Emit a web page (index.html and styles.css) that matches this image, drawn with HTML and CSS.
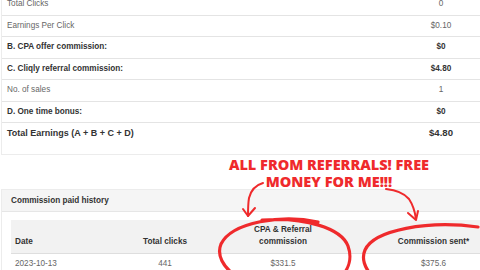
FILE: index.html
```html
<!DOCTYPE html>
<html lang="en">
<head>
    <meta charset="UTF-8">
    <meta name="viewport" content="width=device-width, initial-scale=1.0">
    <title>Earnings</title>

    <link rel="stylesheet" href="styles.css">
</head>

<body>
    <div class="page">
        <div class="card summary">
            <table class="summary-table">
                <tr class="first">
                    <td>Total Clicks</td>
                    <td class="value">0</td>
                </tr>
                <tr>
                    <td>Earnings Per Click</td>
                    <td class="value">$0.10</td>
                </tr>
                <tr class="strong">
                    <td>B. CPA offer commission:</td>
                    <td class="value">$0</td>
                </tr>
                <tr class="strong">
                    <td>C. Cliqly referral commission:</td>
                    <td class="value">$4.80</td>
                </tr>
                <tr>
                    <td>No. of sales</td>
                    <td class="value">1</td>
                </tr>
                <tr class="strong">
                    <td>D. One time bonus:</td>
                    <td class="value">$0</td>
                </tr>
                <tr class="strong total">
                    <td>Total Earnings (A + B + C + D)</td>
                    <td class="value">$4.80</td>
                </tr>
            </table>
        </div>

        <div class="card history">
            <div class="card-header">Commission paid history</div>
            <div class="card-body">
                <table class="history-table">
                    <colgroup>
                        <col class="col-date">
                        <col class="col-clicks">
                        <col class="col-cpa">
                        <col class="col-sent">
                    </colgroup>
                    <thead>
                        <tr>
                            <th class="left">Date</th>
                            <th>Total clicks</th>
                            <th>CPA &amp; Referral<br>commission</th>
                            <th>Commission sent*</th>
                        </tr>
                    </thead>
                    <tbody>
                        <tr>
                            <td class="left">2023-10-13</td>
                            <td>441</td>
                            <td>$331.5</td>
                            <td>$375.6</td>
                        </tr>
                    </tbody>
                </table>
            </div>
        </div>
    </div>

    <!-- scribbles drawn on top of the page -->
    <div class="note">
        <span class="note-line">ALL FROM REFERRALS! FREE</span>
        <span class="note-line">MONEY FOR ME!!!</span>
    </div>
    <svg class="marks" viewBox="0 0 480 270" width="480" height="270">
        <g fill="none" stroke="#ef2a2c" stroke-linecap="round" stroke-linejoin="round">
            <!-- arrows -->
            <path d="M263 183 C256 185 251 190 249 198 C248 204 248 210 248 216" stroke-width="2"/>
            <path d="M243 209 L248 216 L255 208" stroke-width="2"/>
            <path d="M386 189 C396 190 404 193 409 199 C413 205 415 212 416 219" stroke-width="2"/>
            <path d="M408 213 L416 220 L418 211" stroke-width="2"/>
            <!-- rings -->
            <path d="M318 222 C282 214 232 222 221 244 C212 266 246 292 296 292 C338 292 356 268 348 246 C341 228 305 217 262 220" stroke-width="3.2"/>
            <path d="M478 227 C428 220 374 230 365 250 C358 266 375 290 420 294 C450 296 475 294 490 290" stroke-width="3.2"/>
        </g>
    </svg>
</body>
</html>
```

FILE: styles.css
```css
body {
    margin: 0;
    background-color: #FFFFFF;
    font-family: 'Liberation Sans', Arial, sans-serif;
    font-size: 8.2px;
    color: #666;
    overflow: hidden;
    position: relative;
    height: 270px;
}

.page {
    width: 520px;
    margin-top: -7px;
    margin-left: 1px;
}

.card {
    border: 1px solid #ececec;
    background-color: #FFFFFF;
}

table {
    border-collapse: collapse;
}

/* earnings summary */
.summary {
    padding-bottom: 10px;
}

.summary-table {
    width: 100%;
}

.summary-table td {
    border-top: 1px solid #e4e4e4;
    padding: 4px 5px;
    line-height: 12.5px;
}

.summary-table tr.first td {
    border-top: none;
}

.summary-table .value {
    width: 78px;
    padding-right: 40px;
    text-align: center;
}

.summary-table tr.strong td {
    font-weight: bold;
    color: #333;
}

.summary-table tr.total td {
    font-size: 9px;
    line-height: 14px;
    padding-top: 3px;
}

.summary-table tr.total .value {
    font-size: 9.6px;
}

/* paid history */
.history {
    margin-top: 34px;
}

.card-header {
    background-color: #f5f5f5;
    border-bottom: 1px solid #e6e6e6;
    padding: 5px 9px;
    line-height: 11px;
    font-weight: bold;
    color: #333;
}

.card-body {
    padding: 8px 9px 20px;
}

.history-table {
    width: 500px;
    table-layout: fixed;
}

.col-date { width: 109px; }
.col-clicks { width: 90px; }
.col-cpa { width: 146px; }
.col-sent { width: 155px; }

.history-table th {
    background-color: #f2f2f2;
    color: #333;
    font-weight: bold;
    text-align: center;
    vertical-align: bottom;
    padding: 4px 4px 6px;
    line-height: 11.5px;
}

.history-table td {
    border-top: 1px solid #dedede;
    text-align: center;
    padding: 4px 4px;
    line-height: 12px;
}

.history-table .left {
    text-align: left;
}

/* red hand notes */
.note {
    position: absolute;
    left: 209px;
    top: 156px;
    width: 240px;
    display: flex;
    flex-direction: column;
    align-items: center;
    font-family: 'Open Sans', 'Liberation Sans', sans-serif;
    font-weight: 800;
    font-size: 14.5px;
    color: #ef2a2c;
}

.note-line {
    display: block;
    height: 17px;
    line-height: 17px;
    white-space: nowrap;
}

.marks {
    position: absolute;
    left: 0;
    top: 0;
    pointer-events: none;
}
```
